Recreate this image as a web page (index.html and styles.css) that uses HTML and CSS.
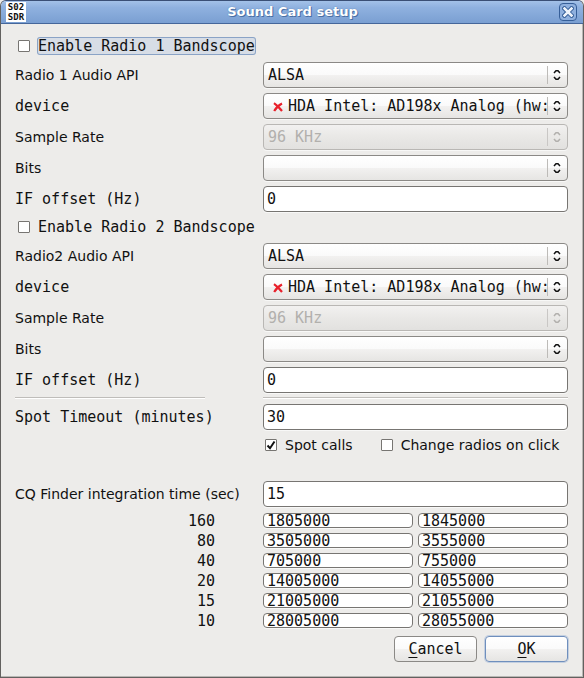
FILE: index.html
```html
<!DOCTYPE html>
<html lang="en">
<head>
<meta charset="utf-8">
<title>Sound Card setup</title>
<link rel="stylesheet" href="styles.css">
</head>
<body>
<svg class="defs" aria-hidden="true">
  <symbol id="arrows" viewBox="0 0 8 12"><path d="M1 4 3 1.700H5L7 4M1 8 3 10.300H5L7 8" fill="none" stroke="currentColor" stroke-width="1.500"/></symbol>
  <symbol id="cross" viewBox="0 0 10 10"><path d="M1 1.200Q5 4 9 9M9 1.500Q4 4 1.200 9" fill="none" stroke="#e8212b" stroke-width="2.200"/></symbol>
</svg>
<form class="window">
  <header class="titlebar">
    <svg class="logo" viewBox="0 0 20 20" aria-hidden="true"><rect width="20" height="20" fill="#fff"/><text x="10" y="8">S02</text><text x="10" y="18">SDR</text></svg>
    <h1 class="title">Sound Card setup</h1>
    <button class="close" type="button" aria-label="Close"><svg viewBox="0 0 12 12"><path d="M2.500 2.500 9.500 9.500M9.500 2.500 2.500 9.500" stroke="#365f99" stroke-width="4.500" stroke-linecap="square"/><path d="M2.500 2.500 9.500 9.500M9.500 2.500 2.500 9.500" stroke="#edf3fb" stroke-width="2.500" stroke-linecap="square"/></svg></button>
  </header>
  <main class="content">
    <section class="radio">
      <label class="check focused"><input type="checkbox"><span>Enable Radio 1 Bandscope</span></label>
      <div class="fields">
        <label class="sans" for="api1">Radio 1 Audio API</label>
        <div class="combo"><select id="api1"><option>ALSA</option></select><svg class="arrows"><use href="#arrows"/></svg></div>
        <label for="dev1">device</label>
        <div class="combo device"><select id="dev1"><option>HDA Intel: AD198x Analog (hw:</option></select><svg class="cross"><use href="#cross"/></svg><svg class="arrows"><use href="#arrows"/></svg></div>
        <label class="sans" for="rate1">Sample Rate</label>
        <div class="combo disabled"><select id="rate1" disabled><option>96 KHz</option></select><svg class="arrows"><use href="#arrows"/></svg></div>
        <label class="sans" for="bits1">Bits</label>
        <div class="combo"><select id="bits1"><option></option></select><svg class="arrows"><use href="#arrows"/></svg></div>
        <label for="if1">IF offset (Hz)</label>
        <input class="entry" id="if1" type="text" value="0">
      </div>
    </section>
    <section class="radio">
      <label class="check"><input type="checkbox"><span>Enable Radio 2 Bandscope</span></label>
      <div class="fields">
        <label class="sans" for="api2">Radio2 Audio API</label>
        <div class="combo"><select id="api2"><option>ALSA</option></select><svg class="arrows"><use href="#arrows"/></svg></div>
        <label for="dev2">device</label>
        <div class="combo device"><select id="dev2"><option>HDA Intel: AD198x Analog (hw:</option></select><svg class="cross"><use href="#cross"/></svg><svg class="arrows"><use href="#arrows"/></svg></div>
        <label class="sans" for="rate2">Sample Rate</label>
        <div class="combo disabled"><select id="rate2" disabled><option>96 KHz</option></select><svg class="arrows"><use href="#arrows"/></svg></div>
        <label class="sans" for="bits2">Bits</label>
        <div class="combo"><select id="bits2"><option></option></select><svg class="arrows"><use href="#arrows"/></svg></div>
        <label for="if2">IF offset (Hz)</label>
        <input class="entry" id="if2" type="text" value="0">
      </div>
    </section>
    <div class="rules"><hr class="short"><hr></div>
    <div class="fields">
      <label for="timeout">Spot Timeout (minutes)</label>
      <input class="entry" id="timeout" type="text" value="30">
    </div>
    <div class="options">
      <label class="check"><input type="checkbox" checked><svg class="tick" viewBox="0 0 12 12" aria-hidden="true"><path d="M2.500 6.500 5 9.200 9.500 2.500" fill="none" stroke="#111" stroke-width="2"/></svg><span>Spot calls</span></label>
      <label class="check"><input type="checkbox"><span>Change radios on click</span></label>
    </div>
    <div class="fields">
      <label class="sans" for="cq">CQ Finder integration time (sec)</label>
      <input class="entry" id="cq" type="text" value="15">
    </div>
    <div class="bands">
      <label for="b160">160</label><input id="b160" type="text" value="1805000"><input type="text" aria-label="160 upper" value="1845000">
      <label for="b80">80</label><input id="b80" type="text" value="3505000"><input type="text" aria-label="80 upper" value="3555000">
      <label for="b40">40</label><input id="b40" type="text" value="705000"><input type="text" aria-label="40 upper" value="755000">
      <label for="b20">20</label><input id="b20" type="text" value="14005000"><input type="text" aria-label="20 upper" value="14055000">
      <label for="b15">15</label><input id="b15" type="text" value="21005000"><input type="text" aria-label="15 upper" value="21055000">
      <label for="b10">10</label><input id="b10" type="text" value="28005000"><input type="text" aria-label="10 upper" value="28055000">
    </div>
    <footer class="actions">
      <button type="button"><u>C</u>ancel</button>
      <button class="default" type="button"><u>O</u>K</button>
    </footer>
  </main>
</form>
</body>
</html>
```
FILE: styles.css
```css
* { box-sizing: border-box; }
body {
  margin: 0;
  background: #edecea;
  color: #111;
  font: 15px/18px "DejaVu Sans Mono", monospace;
}
input, select, button { font: inherit; color: inherit; margin: 0; }
.defs { position: absolute; width: 0; height: 0; }
.window {
  min-height: 100vh;
  border: 1px solid #62615f;
  border-top-color: #3a4f75;
  border-radius: 6px 6px 0 0;
  box-shadow: inset -1px -1px #b9b7b4;
  overflow: hidden;
}
.titlebar {
  display: flex;
  align-items: center;
  height: 23px;
  padding: 0 6px 0 5px;
  background: linear-gradient(#a3c1e8, #8fb1df 30%, #7a9fd2);
  border-bottom: 1px solid #45669a;
}
.logo { width: 20px; height: 20px; }
.logo text { font: bold 9px "DejaVu Sans Mono", monospace; text-anchor: middle; fill: #111; }
.title {
  flex: 1;
  margin: 0;
  text-align: center;
  color: #fff;
  font: bold 13px/20px "DejaVu Sans", sans-serif;
  text-shadow: 1px 1px #4a6fa5, 0 0 1px #3c5f94;
}
.close {
  display: grid;
  place-items: center;
  width: 18px;
  height: 18px;
  padding: 0;
  background: #8fb0de;
  border: 1px solid #365f99;
  border-radius: 4px;
}
.close svg { width: 12px; height: 12px; }
.content { padding: 13px 15px 14px 14px; }

.check { position: relative; display: flex; align-items: center; gap: 8px; height: 18px; padding-left: 3px; }
.focused span {
  background: #d7dde6;
  box-shadow: 0 0 0 1px #8aa3c6;
  border-radius: 2px;
  line-height: 16px;
}
.check input {
  appearance: none;
  width: 12px;
  height: 12px;
  background: #fff;
  border: 1px solid #777572;
  border-radius: 1px;
}
.tick { position: absolute; left: 3px; top: 3px; width: 12px; height: 12px; pointer-events: none; }

.radio { margin-bottom: 6px; }
.radio .check { margin-bottom: 7px; }
.fields {
  display: grid;
  grid-template-columns: 243px 1fr;
  grid-auto-rows: 26px;
  align-items: center;
  gap: 5px;
}
.sans { font-family: "DejaVu Sans", sans-serif; font-size: 14px; white-space: nowrap; }
.combo { position: relative; }
.combo select {
  appearance: none;
  display: block;
  width: 100%;
  height: 26px;
  padding: 0 20px 0 4px;
  background: linear-gradient(#bdbbb8, #bdbbb8) right 19px center / 1px 18px no-repeat, linear-gradient(#fff, #fafafa 50%, #f2f1f0 51%, #e6e5e3);
  border: 1px solid #8b8986;
  border-radius: 4px;
  box-shadow: 0 1px #f8f8f7;
}
.combo.device select { padding-left: 24px; }
.combo svg { position: absolute; pointer-events: none; }
.arrows { right: 7px; top: 7px; width: 8px; height: 12px; }
.cross { left: 10px; top: 9px; width: 10px; height: 10px; }
.disabled { color: #b2b0ad; }
.combo.disabled select {
  opacity: 1;
  color: #b2b0ad;
  background: linear-gradient(#c9c7c5, #c9c7c5) right 19px center / 1px 18px no-repeat, linear-gradient(#f2f1f0, #e9e8e6 50%, #e2e1df);
  border-color: #b9b7b4;
}
.entry, .bands input {
  width: 100%;
  height: 26px;
  min-width: 0;
  padding: 0 3px;
  background: #fff;
  border: 1px solid #777572;
  border-radius: 4px;
  box-shadow: 0 1px #f8f8f7;
}
.rules { display: grid; grid-template-columns: 243px 1fr; gap: 5px; margin: -2px 0 5px; }
.rules hr { width: 100%; margin: 0; border: 0; border-top: 1px solid #bfbdba; border-bottom: 1px solid #fff; }
.rules .short { width: 190px; }
.options {
  display: flex;
  gap: 25px;
  margin: 6px 0 27px 247px;
  font-family: "DejaVu Sans", sans-serif;
  font-size: 14px;
}
.bands {
  display: grid;
  grid-template-columns: 243px 1fr 1fr;
  grid-auto-rows: 15px;
  align-items: center;
  gap: 5px;
  margin: 6px 0 8px;
}
.bands label { padding-right: 43px; text-align: right; }
.bands input { height: 15px; line-height: 13px; }
.actions { display: flex; justify-content: flex-end; gap: 8px; }
.actions button {
  width: 83px;
  height: 26px;
  padding: 0;
  background: linear-gradient(#fff, #fafafa 50%, #f2f1f0 51%, #e6e5e3);
  border: 1px solid #8b8986;
  border-radius: 4px;
}
.actions .default { border-color: #6f8fbd; box-shadow: 0 0 0 1px #c3cfe0; }
.actions u { text-underline-offset: 3px; }
```
